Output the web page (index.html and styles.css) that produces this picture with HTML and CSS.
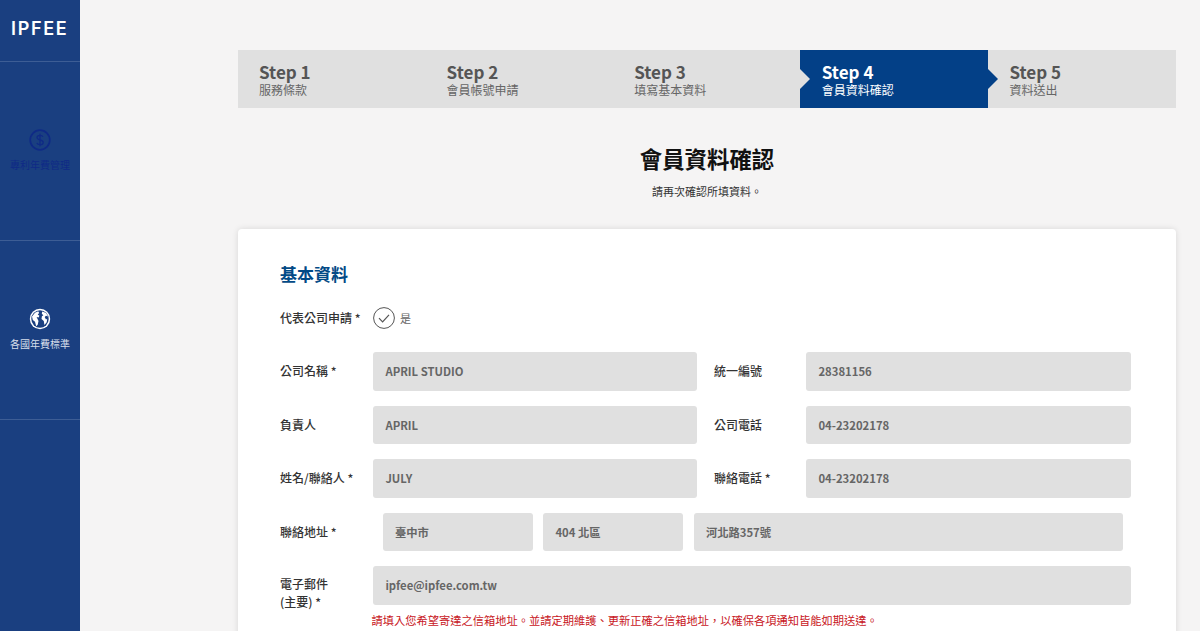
FILE: index.html
```html
<!DOCTYPE html>
<html lang="zh-Hant">
<head>
<meta charset="utf-8">
<title>IPFEE</title>
<link rel="stylesheet" href="styles.css">
</head>
<body>
<div class="app">
  <aside class="sidebar">
    <div class="logo"><span>IPFEE</span></div>
    <a class="nav-item nav-active">
      <svg class="nav-icon" viewBox="0 0 22 22" width="22" height="22"><circle cx="11" cy="11" r="9.8" fill="none" stroke="currentColor" stroke-width="1.7"/><path d="M14 7.8c-.5-1-1.600-1.500-3-1.500-1.700 0-3 .9-3 2.300 0 3.200 6.200 1.600 6.200 4.800 0 1.400-1.400 2.300-3.200 2.300-1.500 0-2.700-.6-3.200-1.700M11 4.800v12.400" fill="none" stroke="currentColor" stroke-width="1.300"/></svg>
      <span>專利年費管理</span>
    </a>
    <a class="nav-item">
      <svg class="nav-icon" viewBox="0 0 22 22" width="22" height="22"><circle cx="11" cy="11" r="10.200" fill="#fff"/><circle cx="11" cy="11" r="8.700" fill="#1a3f80"/><path d="M3 8.500 6 4.800l3.200-1.500 1 1.700-1.500 1.500 1.700 1.300-.8 1.700-2-.6L9.500 13l-.8 3.800-1.500 1.500-1.200-4.500L3.800 12zM13.200 3.400l3.800 1.600 2.200 3.500-2.200-.7-1.300 1.200 1.300 2.500 1.200-.7-.5 3.500-2.300 2.600-.6-4-2.300-1.800.4-2.800 1.500-1-1.600-1.500z" fill="#fff"/></svg>
      <span>各國年費標準</span>
    </a>
  </aside>
  <main class="main">
    <ol class="steps">
      <li class="step"><b>Step 1</b><span>服務條款</span></li>
      <li class="step"><b>Step 2</b><span>會員帳號申請</span></li>
      <li class="step"><b>Step 3</b><span>填寫基本資料</span></li>
      <li class="step step-active"><b>Step 4</b><span>會員資料確認</span></li>
      <li class="step"><b>Step 5</b><span>資料送出</span></li>
    </ol>
    <header class="heading">
      <h1>會員資料確認</h1>
      <p>請再次確認所填資料。</p>
    </header>
    <section class="card">
      <h2>基本資料</h2>
      <div class="check-row">
        <label class="lbl">代表公司申請 *</label>
        <svg class="check" viewBox="0 0 22 22" width="22" height="22"><circle cx="11" cy="11" r="10.400" fill="none" stroke="#555" stroke-width="1"/><path d="M6 11.200l3.600 3.600 6.400-7" fill="none" stroke="#555" stroke-width="1.200"/></svg>
        <span class="check-text">是</span>
      </div>
      <div class="form-row">
        <label class="lbl">公司名稱 *</label><div class="field">APRIL STUDIO</div>
        <label class="lbl lbl2">統一編號</label><div class="field">28381156</div>
      </div>
      <div class="form-row">
        <label class="lbl">負責人</label><div class="field">APRIL</div>
        <label class="lbl lbl2">公司電話</label><div class="field">04-23202178</div>
      </div>
      <div class="form-row">
        <label class="lbl">姓名/聯絡人 *</label><div class="field">JULY</div>
        <label class="lbl lbl2">聯絡電話 *</label><div class="field">04-23202178</div>
      </div>
      <div class="addr-row">
        <label class="lbl">聯絡地址 *</label>
        <div class="field f-city">臺中市</div>
        <div class="field f-zip">404 北區</div>
        <div class="field f-street">河北路357號</div>
      </div>
      <div class="mail-row">
        <label class="lbl">電子郵件<br>(主要) *</label>
        <div class="mail-col">
          <div class="field">ipfee@ipfee.com.tw</div>
          <p class="note">請填入您希望寄達之信箱地址。並請定期維護、更新正確之信箱地址，以確保各項通知皆能如期送達。</p>
        </div>
      </div>
    </section>
  </main>
</div>
</body>
</html>
```
FILE: styles.css
```css
* { box-sizing: border-box; }
html, body { margin: 0; height: 631px; overflow: hidden; }
body { font-family: "Noto Sans CJK TC", "Noto Sans", sans-serif; background: #f5f4f4; color: #333; }
.app { display: flex; height: 631px; overflow: hidden; }

.sidebar { width: 80px; flex: none; background: #1a3f80; display: flex; flex-direction: column; }
.logo { height: 62px; border-bottom: 1px solid #3d5d95; display: flex; padding: 18px 0 0 11px; }
.logo span { font: 600 18px/22px "Inter", sans-serif; letter-spacing: 1.700px; color: #fff; }
.nav-item { height: 179px; border-bottom: 1px solid #3d5d95; display: flex; flex-direction: column; align-items: center; justify-content: center; gap: 7px; padding-bottom: 2px; font-size: 10px; line-height: 14px; color: #d6deea; }
.nav-icon { display: block; }
.nav-active { color: #0f2a86; }

.main { flex: 1; min-width: 0; padding: 50px 24px 0 158px; }
.steps { list-style: none; margin: 0; padding: 0; display: flex; height: 58px; background: #e0e0e0; }
.step { position: relative; flex: 1; padding: 11px 0 0 21px; display: flex; flex-direction: column; color: #555; }
.step b { font-size: 17px; line-height: 21px; font-weight: 700; }
.step span { font-size: 12px; line-height: 15px; color: #666; }
.step-active { background: #034087; color: #fff; margin-left: -1px; padding-left: 22px; }
.step-active span { color: #fff; }
.step-active::before, .step-active::after { content: ""; position: absolute; top: 19px; border-style: solid; border-width: 10px 0 10px 10px; border-color: transparent; }
.step-active::before { left: 0; border-left-color: #e0e0e0; }
.step-active::after { left: 100%; border-left-color: #034087; }

.heading { text-align: center; padding-top: 34px; height: 121px; }
.heading h1 { margin: 0; font-size: 22.400px; line-height: 32px; font-weight: 700; color: #111; }
.heading p { margin: 9px 0 0; font-size: 11px; line-height: 16px; color: #333; }

.card { background: #fff; border-radius: 4px 4px 0 0; box-shadow: 0 0 6px rgba(0,0,0,.12); padding: 33px 44px 0 42px; height: 460px; }
.card h2 { margin: 0; font-size: 17px; line-height: 24px; font-weight: 700; color: #034a86; }
.check-row { display: flex; align-items: center; margin-top: 19px; height: 26px; }
.check-row .lbl { width: 93px; }
.check { display: block; }
.check-text { margin-left: 5px; font-size: 11px; color: #666; }
.lbl { font-size: 12px; line-height: 18px; color: #333; font-weight: 500; }
.form-row { display: grid; grid-template-columns: 93px 324px 109px 325px; align-items: center; margin-top: 15px; }
.check-row + .form-row { margin-top: 21px; }
.lbl2 { padding-left: 17px; }
.field { height: 38.500px; background: #e0e0e0; border-radius: 3px; padding: 0 12.400px; display: flex; align-items: center; font-size: 11.300px; font-weight: 700; color: #666; }
.addr-row { display: flex; align-items: center; margin-top: 15px; }
.addr-row .lbl { width: 102.500px; flex: none; }
.f-city { width: 150.500px; }
.f-zip { width: 140px; margin-left: 10px; }
.f-street { width: 429px; margin-left: 10.500px; }
.mail-row { display: flex; margin-top: 15px; }
.mail-row .lbl { width: 93px; flex: none; padding-top: 9px; line-height: 17.500px; }
.mail-col { width: 758px; }
.note { margin: 7px 0 0 -1.500px; font-size: 11.250px; line-height: 16px; color: #c8161d; white-space: nowrap; }
```
